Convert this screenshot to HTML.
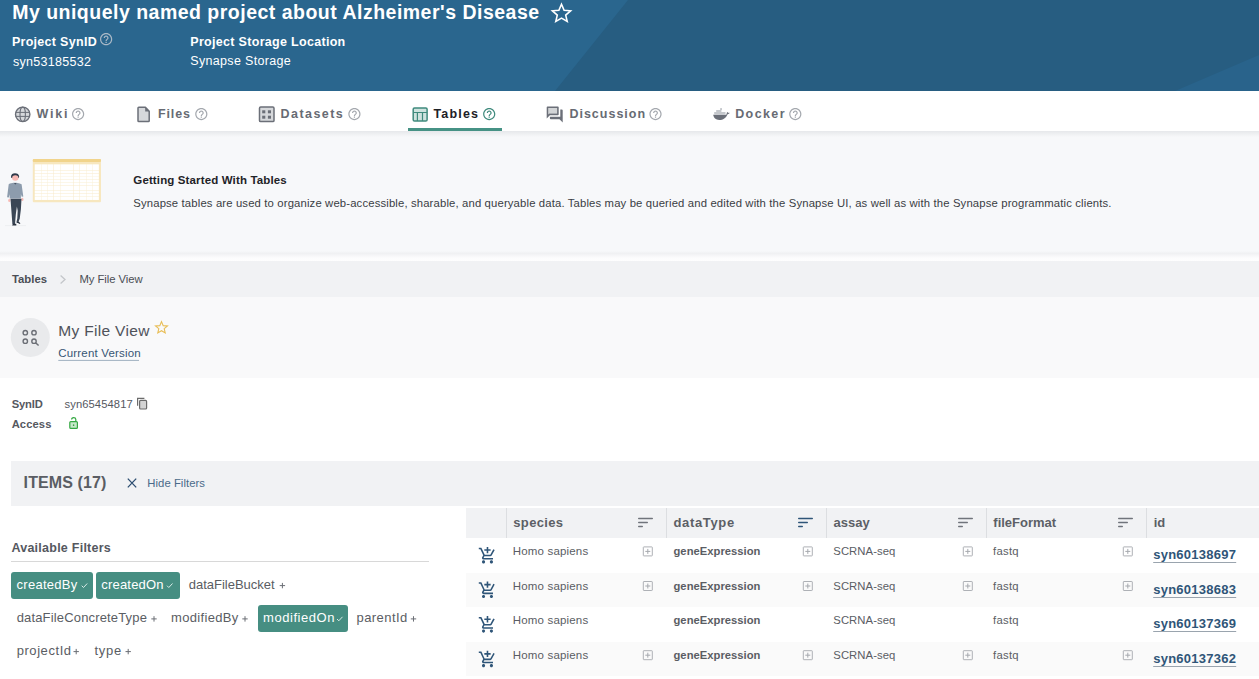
<!DOCTYPE html>
<html><head><meta charset="utf-8">
<style>
*{box-sizing:border-box;margin:0;padding:0}
html,body{width:1259px;height:679px;overflow:hidden;background:#fff;font-family:"Liberation Sans",sans-serif}
.t{position:absolute;white-space:nowrap}
.b{position:absolute}
svg{position:absolute;overflow:visible}

</style></head><body>
<!-- header -->
<div class="b" style="left:0;top:0;width:1259px;height:91px;background:#275d81"></div>
<svg style="left:0;top:0" width="1259" height="679">
  <defs>
    <path id="help" d="M11 18h2v-2h-2v2zm1-16C6.48 2 2 6.48 2 12s4.480 10 10 10 10-4.48 10-10S17.52 2 12 2zm0 18c-4.41 0-8-3.590-8-8s3.59-8 8-8 8 3.59 8 8-3.59 8-8 8zm0-14c-2.21 0-4 1.79-4 4h2c0-1.1.9-2 2-2s2 .9 2 2c0 2-3 1.75-3 5h2c0-2.25 3-2.5 3-5 0-2.21-1.79-4-4-4z"/>
    <path id="sort" d="M3 18h6v-2H3v2zM3 6v2h18V6H3zm0 7h12v-2H3v2z"/>
    <path id="cart" d="M11 9h2V6h3V4h-3V1h-2v3H8v2h3v3zm-4 9c-1.1 0-1.99.9-1.99 2S5.9 22 7 22s2-.9 2-2-.9-2-2-2zm10 0c-1.1 0-1.99.9-1.99 2s.89 2 1.99 2 2-.9 2-2-.9-2-2-2zm-9.830-3.25l.03-.12.9-1.63h7.45c.75 0 1.41-.41 1.75-1.03l3.86-7.01L19.42 4h-.01l-1.1 2-2.76 5H8.53l-.13-.27L6.160 6l-.95-2-.94-2H1v2h2l3.6 7.59-1.35 2.45c-.16.28-.25.61-.25.96 0 1.1.9 2 2 2h12v-2H7.420c-.13 0-.25-.11-.25-.25z"/>
    <g id="psq"><rect x="0.5" y="0.5" width="9" height="9" rx="0.5" fill="none" stroke="#aeb1b6" stroke-width="1"/><path d="M5 2.5v5M2.5 5h5" stroke="#a6a9ae" stroke-width="1"/></g>
    <g id="chk"><path d="M0.5 3.2 L2.3 5 L6 1" fill="none" stroke="#d9ebe7" stroke-width="1"/></g>
    <g id="plus"><path d="M2.7 0v5.4M0 2.7h5.4" stroke="#6b6e75" stroke-width="1"/></g>
  </defs>
  <polygon points="0,0 628,0 555,91 0,91" fill="#2a668e"/>
  <polygon points="1259,55 1259,91 1175,91" fill="#29638b"/>
  <!-- title star -->
  <path d="M561.5,4.3 L564.1,10.3 L570.6,10.8 L565.7,15.1 L567.2,21.4 L561.5,18.1 L555.8,21.4 L557.3,15.1 L552.4,10.8 L558.9,10.3 Z" fill="none" stroke="#fff" stroke-width="1.6" stroke-linejoin="miter"/>
  <!-- ? header -->
  <use href="#help" transform="translate(98.8,31.9) scale(0.61)" fill="#aab9c7"/>

  <!-- tab icons -->
  <g>
    <circle cx="22.7" cy="114.3" r="7.2" fill="#d6d8db" stroke="#6b6f78" stroke-width="1.4"/>
    <ellipse cx="22.7" cy="114.3" rx="2.7" ry="7.2" fill="none" stroke="#6b6f78" stroke-width="1.1"/>
    <path d="M15.5 112.4h14.4M15.5 116.4h14.4" stroke="#6b6f78" stroke-width="1"/>
  </g>
  <use href="#help" transform="translate(70.8,106.8) scale(0.61)" fill="#a4a8ae"/>
  <!-- file -->
  <path d="M138.8 107.2h6.6l3.8 4v9.6a0.8 0.8 0 0 1 -0.8 0.8h-9.6a0.8 0.8 0 0 1 -0.8 -0.8v-12.8a0.8 0.8 0 0 1 0.8 -0.8z" fill="#d6d8db" stroke="#6b6f78" stroke-width="1.5" stroke-linejoin="round"/>
  <path d="M145.2 107.2v4.3h4.3z" fill="#6b6f78"/>
  <use href="#help" transform="translate(194,106.8) scale(0.61)" fill="#a4a8ae"/>
  <!-- datasets -->
  <rect x="259.5" y="107.1" width="14.5" height="14.5" rx="1.2" fill="#d6d8db" stroke="#6b6f78" stroke-width="1.5"/>
  <rect x="262.2" y="110.3" width="3.1" height="3" fill="#6b6f78"/>
  <rect x="267.9" y="110.3" width="3.1" height="3" fill="#6b6f78"/>
  <rect x="262.2" y="115.7" width="3.1" height="3" fill="#6b6f78"/>
  <rect x="267.9" y="115.7" width="3.1" height="3" fill="#6b6f78"/>
  <use href="#help" transform="translate(347.1,106.8) scale(0.61)" fill="#a4a8ae"/>
  <!-- table -->
  <rect x="413.2" y="108" width="13.9" height="13.1" rx="1.3" fill="#cfe3df" stroke="#3f8a7d" stroke-width="1.5"/>
  <path d="M413.2 112.5h13.9M417.4 112.5v8.6M422.5 112.5v8.6" stroke="#3f8a7d" stroke-width="1.2"/>
  <use href="#help" transform="translate(481.9,106.8) scale(0.61)" fill="#3f8a7d"/>
  <!-- discussion -->
  <g transform="translate(545.1,104.8) scale(0.8)">
    <path d="M15 11V4H4v8.17l.59-.59.58-.58H5z" fill="#6b6f78" opacity=".3"/>
    <path d="M15 4v7H5.17l-.59.59-.58.58V4h11m1-2H3c-.55 0-1 .45-1 1v14l4-4h10c.55 0 1-.45 1-1V3c0-.55-.45-1-1-1zm5 4h-2v9H6v2c0 .55.45 1 1 1h11l4 4V7c0-.55-.45-1-1-1z" fill="#6b6f78"/>
  </g>
  <use href="#help" transform="translate(648.2,106.8) scale(0.61)" fill="#a4a8ae"/>
  <!-- docker -->
  <path d="M713.2 114.8h13.1c0.4-1.2 0.9-2.2 0.6-3 0.8 0.5 1.4 1.2 1.4 1.2 0.5-0.3 1-0.2 1.4 0 -0.5 0.6-1.2 1-2.1 1.2 -1.5 3.6-4.5 5.8-8.4 5.8 -3.4 0-5.6-2.2-6-5.2z" fill="#6b6f78"/>
  <rect x="714.2" y="112" width="11.3" height="2.8" fill="#c5c8cc"/>
  <rect x="716.2" y="110" width="5.2" height="2" fill="#c5c8cc"/>
  <rect x="720.1" y="108.1" width="1.9" height="2" fill="#c5c8cc"/>
  <use href="#help" transform="translate(788,106.8) scale(0.61)" fill="#a4a8ae"/>

</svg>
<!-- tabs area -->
<div class="b" style="left:408px;top:128px;width:94px;height:3px;background:#469285"></div>
<!-- getting started -->
<div class="b" style="left:0;top:131px;width:1259px;height:122px;background:#f7f8fa"></div>
<div class="b" style="left:0;top:131px;width:1259px;height:6px;background:linear-gradient(#e6e8eb,#f7f8fa)"></div>
<div class="b" style="left:0;top:251px;width:1259px;height:2px;background:linear-gradient(#f7f8fa,#f1f2f4)"></div><div class="b" style="left:0;top:253px;width:1259px;height:8px;background:linear-gradient(#eff0f2,#fcfcfd 60%,#fefefe)"></div>
<!-- breadcrumb -->
<div class="b" style="left:0;top:261px;width:1259px;height:36px;background:#f1f2f4"></div>
<!-- entity header -->
<div class="b" style="left:0;top:297px;width:1259px;height:81px;background:#f9f9fa"></div>
<!-- items bar -->
<div class="b" style="left:11px;top:461px;width:1248px;height:45px;background:#f1f2f4"></div>
<!-- table -->
<div class="b" style="left:466px;top:508px;width:793px;height:30px;background:#f1f2f4"></div>
<div class="b" style="left:466px;top:572.6px;width:793px;height:34.6px;background:#fafafa"></div>
<div class="b" style="left:466px;top:641.8px;width:793px;height:34.6px;background:#fafafa"></div>
<!-- filters -->
<div class="b" style="left:11px;top:561px;width:418px;height:1px;background:#d8d8d8"></div>
<div class="b" style="left:11px;top:572px;width:82px;height:27px;background:#468e82;border-radius:3px"></div>
<div class="b" style="left:96px;top:572px;width:83.6px;height:27px;background:#468e82;border-radius:3px"></div>
<div class="b" style="left:258px;top:605px;width:90px;height:27px;background:#468e82;border-radius:3px"></div>

<svg style="left:0;top:0" width="1259" height="679">
  <!-- breadcrumb chevron -->
  <path d="M60.6 275.6 L65 279.5 L60.6 283.4" fill="none" stroke="#c3c6ca" stroke-width="1.3"/>
  <!-- entity icon -->
  <circle cx="30.3" cy="337.4" r="19.5" fill="#e9eaec"/>
  <g fill="none" stroke="#6b6e75" stroke-width="1.4">
    <circle cx="25.3" cy="332.7" r="2.2"/>
    <circle cx="34.0" cy="332.7" r="2.2"/>
    <circle cx="25.3" cy="341.2" r="2.2"/>
    <circle cx="34.0" cy="341.2" r="2.2"/>
    <path d="M35.6 342.8 L38.6 345.6"/>
  </g>
  <!-- yellow star -->
  <path d="M161.5,321.6 L163.2,325.6 L167.5,325.9 L164.2,328.7 L165.2,332.9 L161.5,330.7 L157.8,332.9 L158.8,328.7 L155.5,325.9 L159.8,325.6 Z" fill="none" stroke="#e8bd55" stroke-width="1.1"/>
  <!-- current version underline -->
  <path d="M58.3 360.4h80.7" stroke="#9fb0c0" stroke-width="1"/>
  <!-- copy icon -->
  <path d="M137.6 405.8v-7.4h6.8" fill="none" stroke="#6b6b6b" stroke-width="1.2"/>
  <rect x="139.6" y="400.4" width="7" height="8.6" rx="1" fill="#d4d4d4" stroke="#6b6b6b" stroke-width="1.2"/>
  <!-- lock -->
  <rect x="69.8" y="421.6" width="7.6" height="6.8" rx="1" fill="#c8e8cb" stroke="#36a844" stroke-width="1.2"/>
  <path d="M71.6 419.6 C71.6 416.9 75.6 416.9 75.8 419.4 V421.6" fill="none" stroke="#36a844" stroke-width="1.2"/>
  <rect x="72.9" y="424.2" width="1.4" height="1.8" rx="0.6" fill="#36a844"/>
  <!-- X -->
  <path d="M127.8 478.6 L136.2 487.4 M136.2 478.6 L127.8 487.4" stroke="#2c4d70" stroke-width="1.3"/>
  <!-- chip checks -->
  <use href="#chk" x="81.2" y="582.5"/>
  <use href="#chk" x="166.5" y="582.5"/>
  <use href="#chk" x="336.5" y="615.8"/>
  <!-- filter plus -->
  <use href="#plus" x="279.7" y="582.9"/>
  <use href="#plus" x="151.3" y="616.2"/>
  <use href="#plus" x="242.3" y="616.2"/>
  <use href="#plus" x="410.8" y="616.2"/>
  <use href="#plus" x="73.5" y="648.9"/>
  <use href="#plus" x="125.5" y="648.9"/>
  <!-- table dividers -->
  <path d="M506.5 508v30M666.5 508v30M826.5 508v30M986.5 508v30M1146.5 508v30" stroke="#dcdee1" stroke-width="1"/>
  <!-- sort icons -->
  <path d="M638.75 518.6H652.25M638.75 522.6H647.25M638.75 526.6H642.25" stroke="#70747b" stroke-width="1.5" stroke-linecap="round"/>
  <path d="M798.75 518.6H812.25M798.75 522.6H807.25M798.75 526.6H802.25" stroke="#2f5578" stroke-width="1.5" stroke-linecap="round"/>
  <path d="M958.75 518.6H972.25M958.75 522.6H967.25M958.75 526.6H962.25" stroke="#70747b" stroke-width="1.5" stroke-linecap="round"/>
  <path d="M1118.75 518.6H1132.25M1118.75 522.6H1127.25M1118.75 526.6H1122.25" stroke="#70747b" stroke-width="1.5" stroke-linecap="round"/>
  <!-- carts -->
  <use href="#cart" transform="translate(478.0,546.1) scale(0.79)" fill="#2f5578"/>
  <use href="#cart" transform="translate(478.0,580.7) scale(0.79)" fill="#2f5578"/>
  <use href="#cart" transform="translate(478.0,615.3) scale(0.79)" fill="#2f5578"/>
  <use href="#cart" transform="translate(478.0,649.9) scale(0.79)" fill="#2f5578"/>
  <!-- plus squares -->
  <use href="#psq" x="642.8" y="546.4"/><use href="#psq" x="802.8" y="546.4"/><use href="#psq" x="962.8" y="546.4"/><use href="#psq" x="1122.8" y="546.4"/>
  <use href="#psq" x="642.8" y="581.0"/><use href="#psq" x="802.8" y="581.0"/><use href="#psq" x="962.8" y="581.0"/><use href="#psq" x="1122.8" y="581.0"/>
  <use href="#psq" x="642.8" y="650.2"/><use href="#psq" x="802.8" y="650.2"/><use href="#psq" x="962.8" y="650.2"/><use href="#psq" x="1122.8" y="650.2"/>
</svg>
<svg style="left:0;top:0" width="1259" height="679">
  <rect x="32.8" y="158.9" width="68.2" height="43.4" rx="1" fill="#f7e7bf"/>
  <rect x="32.8" y="158.9" width="68.2" height="3.2" rx="1" fill="#f1d48c"/>
  <rect x="34.75" y="164.35" width="6.80" height="5.90" fill="#ffffff"/><rect x="34.75" y="170.55" width="6.80" height="2.80" fill="#ffffff"/><rect x="34.75" y="173.65" width="6.80" height="2.90" fill="#ffffff"/><rect x="34.75" y="176.55" width="6.80" height="2.90" fill="#ffffff"/><rect x="34.75" y="179.65" width="6.80" height="2.90" fill="#ffffff"/><rect x="34.75" y="182.75" width="6.80" height="2.50" fill="#ffffff"/><rect x="34.75" y="185.55" width="6.80" height="5.00" fill="#ffffff"/><rect x="34.75" y="190.85" width="6.80" height="2.60" fill="#ffffff"/><rect x="34.75" y="193.75" width="6.80" height="2.50" fill="#ffffff"/><rect x="34.75" y="196.45" width="6.80" height="3.50" fill="#ffffff"/><rect x="41.65" y="164.35" width="5.90" height="5.90" fill="#ffffff"/><rect x="41.65" y="170.55" width="5.90" height="2.80" fill="#ffffff"/><rect x="41.65" y="173.65" width="5.90" height="2.90" fill="#ffffff"/><rect x="41.65" y="176.55" width="5.90" height="2.90" fill="#ffffff"/><rect x="41.65" y="179.65" width="5.90" height="2.90" fill="#ffffff"/><rect x="41.65" y="182.75" width="5.90" height="2.50" fill="#ffffff"/><rect x="41.65" y="185.55" width="5.90" height="5.00" fill="#ffffff"/><rect x="41.65" y="190.85" width="5.90" height="2.60" fill="#ffffff"/><rect x="41.65" y="193.75" width="5.90" height="2.50" fill="#ffffff"/><rect x="41.65" y="196.45" width="5.90" height="3.50" fill="#ffffff"/><rect x="47.65" y="164.35" width="5.70" height="5.90" fill="#ffffff"/><rect x="47.65" y="170.55" width="5.70" height="2.80" fill="#ffffff"/><rect x="47.65" y="173.65" width="5.70" height="2.90" fill="#ffffff"/><rect x="47.65" y="176.55" width="5.70" height="2.90" fill="#ffffff"/><rect x="47.65" y="179.65" width="5.70" height="2.90" fill="#ffffff"/><rect x="47.65" y="182.75" width="5.70" height="2.50" fill="#ffffff"/><rect x="47.65" y="185.55" width="5.70" height="5.00" fill="#ffffff"/><rect x="47.65" y="190.85" width="5.70" height="2.60" fill="#ffffff"/><rect x="47.65" y="193.75" width="5.70" height="2.50" fill="#ffffff"/><rect x="47.65" y="196.45" width="5.70" height="3.50" fill="#ffffff"/><rect x="53.65" y="164.35" width="6.80" height="5.90" fill="#ffffff"/><rect x="53.65" y="170.55" width="6.80" height="2.80" fill="#ffffff"/><rect x="53.65" y="173.65" width="6.80" height="2.90" fill="#ffffff"/><rect x="53.65" y="176.55" width="6.80" height="2.90" fill="#ffffff"/><rect x="53.65" y="179.65" width="6.80" height="2.90" fill="#ffffff"/><rect x="53.65" y="182.75" width="6.80" height="2.50" fill="#ffffff"/><rect x="53.65" y="185.55" width="6.80" height="5.00" fill="#ffffff"/><rect x="53.65" y="190.85" width="6.80" height="2.60" fill="#ffffff"/><rect x="53.65" y="193.75" width="6.80" height="2.50" fill="#ffffff"/><rect x="53.65" y="196.45" width="6.80" height="3.50" fill="#ffffff"/><rect x="60.55" y="164.35" width="12.80" height="5.90" fill="#ffffff"/><rect x="60.55" y="170.55" width="12.80" height="2.80" fill="#ffffff"/><rect x="60.55" y="173.65" width="12.80" height="2.90" fill="#ffffff"/><rect x="60.55" y="176.55" width="12.80" height="2.90" fill="#ffffff"/><rect x="60.55" y="179.65" width="12.80" height="2.90" fill="#ffffff"/><rect x="60.55" y="182.75" width="12.80" height="2.50" fill="#ffffff"/><rect x="60.55" y="185.55" width="12.80" height="5.00" fill="#ffffff"/><rect x="60.55" y="190.85" width="12.80" height="2.60" fill="#ffffff"/><rect x="60.55" y="193.75" width="12.80" height="2.50" fill="#ffffff"/><rect x="60.55" y="196.45" width="12.80" height="3.50" fill="#ffffff"/><rect x="73.65" y="164.35" width="5.70" height="5.90" fill="#ffffff"/><rect x="73.65" y="170.55" width="5.70" height="2.80" fill="#ffffff"/><rect x="73.65" y="173.65" width="5.70" height="2.90" fill="#ffffff"/><rect x="73.65" y="176.55" width="5.70" height="2.90" fill="#ffffff"/><rect x="73.65" y="179.65" width="5.70" height="2.90" fill="#ffffff"/><rect x="73.65" y="182.75" width="5.70" height="2.50" fill="#ffffff"/><rect x="73.65" y="185.55" width="5.70" height="5.00" fill="#ffffff"/><rect x="73.65" y="190.85" width="5.70" height="2.60" fill="#ffffff"/><rect x="73.65" y="193.75" width="5.70" height="2.50" fill="#ffffff"/><rect x="73.65" y="196.45" width="5.70" height="3.50" fill="#ffffff"/><rect x="79.55" y="164.35" width="6.90" height="5.90" fill="#ffffff"/><rect x="79.55" y="170.55" width="6.90" height="2.80" fill="#ffffff"/><rect x="79.55" y="173.65" width="6.90" height="2.90" fill="#ffffff"/><rect x="79.55" y="176.55" width="6.90" height="2.90" fill="#ffffff"/><rect x="79.55" y="179.65" width="6.90" height="2.90" fill="#ffffff"/><rect x="79.55" y="182.75" width="6.90" height="2.50" fill="#ffffff"/><rect x="79.55" y="185.55" width="6.90" height="5.00" fill="#ffffff"/><rect x="79.55" y="190.85" width="6.90" height="2.60" fill="#ffffff"/><rect x="79.55" y="193.75" width="6.90" height="2.50" fill="#ffffff"/><rect x="79.55" y="196.45" width="6.90" height="3.50" fill="#ffffff"/><rect x="86.55" y="164.35" width="5.90" height="5.90" fill="#ffffff"/><rect x="86.55" y="170.55" width="5.90" height="2.80" fill="#ffffff"/><rect x="86.55" y="173.65" width="5.90" height="2.90" fill="#ffffff"/><rect x="86.55" y="176.55" width="5.90" height="2.90" fill="#ffffff"/><rect x="86.55" y="179.65" width="5.90" height="2.90" fill="#ffffff"/><rect x="86.55" y="182.75" width="5.90" height="2.50" fill="#ffffff"/><rect x="86.55" y="185.55" width="5.90" height="5.00" fill="#ffffff"/><rect x="86.55" y="190.85" width="5.90" height="2.60" fill="#ffffff"/><rect x="86.55" y="193.75" width="5.90" height="2.50" fill="#ffffff"/><rect x="86.55" y="196.45" width="5.90" height="3.50" fill="#ffffff"/><rect x="92.55" y="164.35" width="6.30" height="5.90" fill="#ffffff"/><rect x="92.55" y="170.55" width="6.30" height="2.80" fill="#ffffff"/><rect x="92.55" y="173.65" width="6.30" height="2.90" fill="#ffffff"/><rect x="92.55" y="176.55" width="6.30" height="2.90" fill="#ffffff"/><rect x="92.55" y="179.65" width="6.30" height="2.90" fill="#ffffff"/><rect x="92.55" y="182.75" width="6.30" height="2.50" fill="#ffffff"/><rect x="92.55" y="185.55" width="6.30" height="5.00" fill="#ffffff"/><rect x="92.55" y="190.85" width="6.30" height="2.60" fill="#ffffff"/><rect x="92.55" y="193.75" width="6.30" height="2.50" fill="#ffffff"/><rect x="92.55" y="196.45" width="6.30" height="3.50" fill="#ffffff"/>
  <!-- person -->
  <path d="M5 225.6h21" stroke="#e6e8eb" stroke-width="0.6"/>
  <path d="M11 176.6c0-2.3 1.8-3.4 4-3.4s4.2 1.1 4.1 3.4l-0.3 1.4h-7.5z" fill="#2f3a4a"/>
  <ellipse cx="15.3" cy="178" rx="3.2" ry="2.8" fill="#f7b9b4"/>
  <path d="M8.7 184.2 c1.5-0.9 3.4-1.2 5-1.4 h2.5 c1.9 0.2 3.8 0.6 5.4 1.4 l1.7 12.2 -1.6 0.3 -0.8 -2.8 v4.7 h-11.2 v-4.3 l-0.9 3.1 -1.7 -0.2z" fill="#8d9cad"/>
  <ellipse cx="9.3" cy="200.4" rx="1.1" ry="1.7" fill="#f7b9b4"/>
  <ellipse cx="22.4" cy="199.4" rx="1.1" ry="1.6" fill="#f7b9b4"/>
  <path d="M10.5 198.7h11l-0.6 10.5 -1.2 9.6 -1.7 4.1 -1.6-0.5 0.9-4 0.4-7.7 -0.8-4.3 -1.1 8 -0.8 9.8 h-2.6z" fill="#3a4655"/>
  <path d="M13 223.8h3.3v1.6h-4.2z M16.6 222.2l1.9-0.6 1.9 1.6-0.7 0.7z" fill="#2a3340"/>
  <path d="M14 183.2h2.6l-1.3 1.4z" fill="#2f3a4a"/>
</svg>
<div class="t" id="t0" style="left:12.20px;top:3.00px;font-size:19.5px;line-height:19.5px;font-weight:bold;color:#ffffff;letter-spacing:0.490px;">My uniquely named project about Alzheimer&#39;s Disease</div>
<div class="t" id="t1" style="left:11.90px;top:36.00px;font-size:12.5px;line-height:12.5px;font-weight:bold;color:#ffffff;letter-spacing:0.292px;">Project SynID</div>
<div class="t" id="t2" style="left:13.00px;top:56.00px;font-size:12.5px;line-height:12.5px;color:#ffffff;letter-spacing:0.300px;">syn53185532</div>
<div class="t" id="t3" style="left:190.30px;top:36.00px;font-size:12.5px;line-height:12.5px;font-weight:bold;color:#ffffff;letter-spacing:0.304px;">Project Storage Location</div>
<div class="t" id="t4" style="left:190.30px;top:55.00px;font-size:12.5px;line-height:12.5px;color:#ffffff;letter-spacing:0.321px;">Synapse Storage</div>
<div class="t" id="t5" style="left:36.40px;top:108.00px;font-size:12.5px;line-height:12.5px;font-weight:bold;color:#676b73;letter-spacing:1.833px;">Wiki</div>
<div class="t" id="t6" style="left:158.00px;top:108.00px;font-size:12.5px;line-height:12.5px;font-weight:bold;color:#676b73;letter-spacing:0.875px;">Files</div>
<div class="t" id="t7" style="left:280.60px;top:108.00px;font-size:12.5px;line-height:12.5px;font-weight:bold;color:#676b73;letter-spacing:1.429px;">Datasets</div>
<div class="t" id="t8" style="left:433.40px;top:108.00px;font-size:12.5px;line-height:12.5px;font-weight:bold;color:#1d2026;letter-spacing:1.200px;">Tables</div>
<div class="t" id="t9" style="left:569.40px;top:108.00px;font-size:12.5px;line-height:12.5px;font-weight:bold;color:#676b73;letter-spacing:1.000px;">Discussion</div>
<div class="t" id="t10" style="left:735.20px;top:108.00px;font-size:12.5px;line-height:12.5px;font-weight:bold;color:#676b73;letter-spacing:1.400px;">Docker</div>
<div class="t" id="t11" style="left:133.30px;top:175.00px;font-size:11.5px;line-height:11.5px;font-weight:bold;color:#1f2328;letter-spacing:0.135px;">Getting Started With Tables</div>
<div class="t" id="t12" style="left:133.30px;top:198.00px;font-size:11.3px;line-height:11.3px;color:#3a3d44;letter-spacing:0.147px;">Synapse tables are used to organize web-accessible, sharable, and queryable data. Tables may be queried and edited with the Synapse UI, as well as with the Synapse programmatic clients.</div>
<div class="t" id="t13" style="left:12.00px;top:274.00px;font-size:11.3px;line-height:11.3px;font-weight:bold;color:#4b4e55;letter-spacing:-0.000px;">Tables</div>
<div class="t" id="t14" style="left:79.40px;top:274.00px;font-size:11.3px;line-height:11.3px;color:#4b4e55;letter-spacing:-0.045px;">My File View</div>
<div class="t" id="t15" style="left:58.30px;top:323.00px;font-size:15.5px;line-height:15.5px;color:#50535a;letter-spacing:0.318px;">My File View</div>
<div class="t" id="t16" style="left:58.30px;top:348.00px;font-size:11.5px;line-height:11.5px;color:#375574;letter-spacing:0.179px;">Current Version</div>
<div class="t" id="t17" style="left:11.70px;top:399.00px;font-size:11.2px;line-height:11.2px;font-weight:bold;color:#55585f;letter-spacing:-0.125px;">SynID</div>
<div class="t" id="t18" style="left:64.50px;top:399.00px;font-size:11.2px;line-height:11.2px;color:#55585f;letter-spacing:0.100px;">syn65454817</div>
<div class="t" id="t19" style="left:11.70px;top:419.00px;font-size:11.2px;line-height:11.2px;font-weight:bold;color:#55585f;letter-spacing:0.100px;">Access</div>
<div class="t" id="t20" style="left:23.60px;top:475.00px;font-size:16px;line-height:16px;font-weight:bold;color:#5a5d63;letter-spacing:0.111px;">ITEMS (17)</div>
<div class="t" id="t21" style="left:147.30px;top:478.00px;font-size:11.3px;line-height:11.3px;color:#4a6a8a;letter-spacing:0.045px;">Hide Filters</div>
<div class="t" id="t22" style="left:11.40px;top:542.00px;font-size:12.5px;line-height:12.5px;font-weight:bold;color:#55585f;letter-spacing:0.250px;">Available Filters</div>
<div class="t" id="t23" style="left:16.60px;top:578.00px;font-size:13px;line-height:13px;color:#ffffff;letter-spacing:0.250px;">createdBy</div>
<div class="t" id="t24" style="left:101.30px;top:578.00px;font-size:13px;line-height:13px;color:#ffffff;letter-spacing:0.188px;">createdOn</div>
<div class="t" id="t25" style="left:188.70px;top:578.00px;font-size:13px;line-height:13px;color:#5a5d63;letter-spacing:0.000px;">dataFileBucket</div>
<div class="t" id="t26" style="left:16.70px;top:611.00px;font-size:13px;line-height:13px;color:#5a5d63;letter-spacing:0.158px;">dataFileConcreteType</div>
<div class="t" id="t27" style="left:171.00px;top:611.00px;font-size:13px;line-height:13px;color:#5a5d63;letter-spacing:0.333px;">modifiedBy</div>
<div class="t" id="t28" style="left:263.00px;top:611.00px;font-size:13px;line-height:13px;color:#ffffff;letter-spacing:0.556px;">modifiedOn</div>
<div class="t" id="t29" style="left:356.50px;top:611.00px;font-size:13px;line-height:13px;color:#5a5d63;letter-spacing:0.429px;">parentId</div>
<div class="t" id="t30" style="left:16.70px;top:644.00px;font-size:13px;line-height:13px;color:#5a5d63;letter-spacing:0.562px;">projectId</div>
<div class="t" id="t31" style="left:94.60px;top:644.00px;font-size:13px;line-height:13px;color:#5a5d63;letter-spacing:0.667px;">type</div>
<div class="t" id="t32" style="left:513.30px;top:516.00px;font-size:13px;line-height:13px;font-weight:bold;color:#5c5f66;letter-spacing:0.333px;">species</div>
<div class="t" id="t33" style="left:673.50px;top:516.00px;font-size:13px;line-height:13px;font-weight:bold;color:#5c5f66;letter-spacing:0.643px;">dataType</div>
<div class="t" id="t34" style="left:833.50px;top:516.00px;font-size:13px;line-height:13px;font-weight:bold;color:#5c5f66;letter-spacing:-0.000px;">assay</div>
<div class="t" id="t35" style="left:993.30px;top:516.00px;font-size:13px;line-height:13px;font-weight:bold;color:#5c5f66;letter-spacing:0.000px;">fileFormat</div>
<div class="t" id="t36" style="left:1153.70px;top:516.00px;font-size:13px;line-height:13px;font-weight:bold;color:#5c5f66;letter-spacing:0.000px;">id</div>
<div class="t" id="t37" style="left:512.70px;top:546.00px;font-size:11.5px;line-height:11.5px;color:#5a5d64;letter-spacing:0.182px;">Homo sapiens</div>
<div class="t" id="t38" style="left:673.50px;top:546.00px;font-size:11.2px;line-height:11.2px;font-weight:bold;color:#5a5d64;letter-spacing:0.038px;">geneExpression</div>
<div class="t" id="t39" style="left:833.30px;top:546.00px;font-size:11.3px;line-height:11.3px;color:#5a5d64;letter-spacing:0.062px;">SCRNA-seq</div>
<div class="t" id="t40" style="left:993.10px;top:546.00px;font-size:11.3px;line-height:11.3px;color:#5a5d64;letter-spacing:0.250px;">fastq</div>
<div class="t" id="t41" style="left:1153.20px;top:548.00px;font-size:13px;line-height:13px;font-weight:bold;color:#2f5578;letter-spacing:0.250px;text-decoration:underline;text-decoration-color:#9aa4ae;text-underline-offset:3px;text-decoration-thickness:1px;">syn60138697</div>
<div class="t" id="t42" style="left:512.70px;top:581.00px;font-size:11.5px;line-height:11.5px;color:#5a5d64;letter-spacing:0.182px;">Homo sapiens</div>
<div class="t" id="t43" style="left:673.50px;top:581.00px;font-size:11.2px;line-height:11.2px;font-weight:bold;color:#5a5d64;letter-spacing:0.038px;">geneExpression</div>
<div class="t" id="t44" style="left:833.30px;top:581.00px;font-size:11.3px;line-height:11.3px;color:#5a5d64;letter-spacing:0.062px;">SCRNA-seq</div>
<div class="t" id="t45" style="left:993.10px;top:581.00px;font-size:11.3px;line-height:11.3px;color:#5a5d64;letter-spacing:0.250px;">fastq</div>
<div class="t" id="t46" style="left:1153.20px;top:583.00px;font-size:13px;line-height:13px;font-weight:bold;color:#2f5578;letter-spacing:0.250px;text-decoration:underline;text-decoration-color:#9aa4ae;text-underline-offset:3px;text-decoration-thickness:1px;">syn60138683</div>
<div class="t" id="t47" style="left:512.70px;top:615.00px;font-size:11.5px;line-height:11.5px;color:#5a5d64;letter-spacing:0.182px;">Homo sapiens</div>
<div class="t" id="t48" style="left:673.50px;top:615.00px;font-size:11.2px;line-height:11.2px;font-weight:bold;color:#5a5d64;letter-spacing:0.038px;">geneExpression</div>
<div class="t" id="t49" style="left:833.30px;top:615.00px;font-size:11.3px;line-height:11.3px;color:#5a5d64;letter-spacing:0.062px;">SCRNA-seq</div>
<div class="t" id="t50" style="left:993.10px;top:615.00px;font-size:11.3px;line-height:11.3px;color:#5a5d64;letter-spacing:0.250px;">fastq</div>
<div class="t" id="t51" style="left:1153.20px;top:617.00px;font-size:13px;line-height:13px;font-weight:bold;color:#2f5578;letter-spacing:0.250px;text-decoration:underline;text-decoration-color:#9aa4ae;text-underline-offset:3px;text-decoration-thickness:1px;">syn60137369</div>
<div class="t" id="t52" style="left:512.70px;top:650.00px;font-size:11.5px;line-height:11.5px;color:#5a5d64;letter-spacing:0.182px;">Homo sapiens</div>
<div class="t" id="t53" style="left:673.50px;top:650.00px;font-size:11.2px;line-height:11.2px;font-weight:bold;color:#5a5d64;letter-spacing:0.038px;">geneExpression</div>
<div class="t" id="t54" style="left:833.30px;top:650.00px;font-size:11.3px;line-height:11.3px;color:#5a5d64;letter-spacing:0.062px;">SCRNA-seq</div>
<div class="t" id="t55" style="left:993.10px;top:650.00px;font-size:11.3px;line-height:11.3px;color:#5a5d64;letter-spacing:0.250px;">fastq</div>
<div class="t" id="t56" style="left:1153.20px;top:652.00px;font-size:13px;line-height:13px;font-weight:bold;color:#2f5578;letter-spacing:0.250px;text-decoration:underline;text-decoration-color:#9aa4ae;text-underline-offset:3px;text-decoration-thickness:1px;">syn60137362</div>

</body></html>
